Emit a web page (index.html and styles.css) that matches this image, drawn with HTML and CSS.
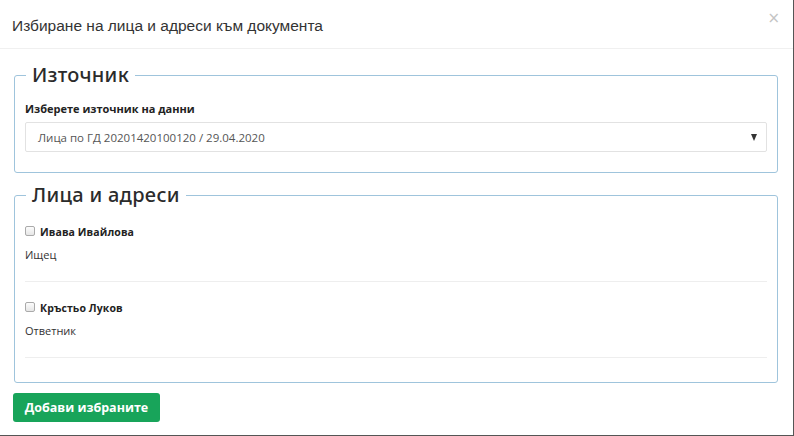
FILE: index.html
```html
<!DOCTYPE html>
<html lang="bg">
<head>
<meta charset="utf-8">
<title>Избиране на лица и адреси към документа</title>
<link rel="stylesheet" href="styles.css">
</head>
<body>
<div class="modal">
  <div class="modal-header">
    <h4 class="modal-title">Избиране на лица и адреси към документа</h4>
    <span class="close">×</span>
  </div>
  <div class="modal-body">
    <fieldset class="group group-source">
      <legend>Източник</legend>
      <label class="field-label">Изберете източник на данни</label>
      <div class="select">
        <span class="select-text">Лица по ГД 20201420100120 / 29.04.2020</span>
        <span class="select-arrow"></span>
      </div>
    </fieldset>
    <fieldset class="group group-persons">
      <legend>Лица и адреси</legend>
      <div class="person">
        <label class="person-name"><span class="checkbox"></span>Ивава Ивайлова</label>
        <div class="person-role">Ищец</div>
      </div>
      <div class="person">
        <label class="person-name"><span class="checkbox"></span>Кръстьо Луков</label>
        <div class="person-role">Ответник</div>
      </div>
    </fieldset>
    <button class="btn-add" type="button">Добави избраните</button>
  </div>
</div>
</body>
</html>
```
FILE: styles.css
```css
* { box-sizing: border-box; }
html, body { margin: 0; padding: 0; background: #fff; }
body { font-family: "Liberation Sans", Arial, sans-serif; color: #333; }

.modal {
  width: 794px;
  height: 436px;
  border-right: 1px solid #555;
  border-bottom: 1px solid #555;
  background: #fff;
  overflow: hidden;
}

.modal-header {
  position: relative;
  height: 49px;
  border-bottom: 1px solid #f0f0f0;
  padding: 16px 12px 0;
}
.modal-title {
  margin: 0;
  font-family: "Liberation Sans", Arial, sans-serif;
  font-weight: normal;
  font-size: 15.5px;
  line-height: 20px;
  color: #333;
}
.close {
  position: absolute;
  right: 13px;
  top: 9px;
  font-size: 15px;
  color: #c4c4c4;
  font-family: "DejaVu Sans", sans-serif;
}

.modal-body {
  padding: 12px 15px 0 14px;
}

.group {
  margin: 0;
  border: 1px solid #9fc4dc;
  border-radius: 3px;
  padding: 0 10px;
}
.group legend {
  margin-left: 1px;
  padding: 0 6px 0 6px;
  font-family: "Noto Sans", "Open Sans", sans-serif;
  font-size: 20px;
  line-height: 28px;
  font-weight: 500;
  color: #2b2b2b;
  letter-spacing: 0.3px;
}

.group-source { padding-top: 12px; padding-bottom: 20px; }
.field-label {
  display: block;
  font-family: "Open Sans", sans-serif;
  font-weight: bold;
  font-size: 11px;
  line-height: 16px;
  color: #222;
  margin-bottom: 5px;
}
.select {
  display: flex;
  align-items: center;
  justify-content: space-between;
  height: 30px;
  border: 1px solid #e2e2e2;
  border-radius: 2px;
  padding: 0 9px 0 12px;
}
.select-text {
  font-family: "Open Sans", sans-serif;
  font-size: 11.5px;
  color: #555;
}
.select-arrow {
  width: 0;
  height: 0;
  border-left: 3.5px solid transparent;
  border-right: 3.5px solid transparent;
  border-top: 7px solid #333;
  margin-top: 1px;
}

.group-persons {
  margin-top: 8px;
  padding-top: 13px;
  padding-bottom: 24px;
}
.person {
  border-bottom: 1px solid #eeeeee;
  padding-bottom: 16px;
  margin-bottom: 16px;
}
.person:last-child { margin-bottom: 0; }
.person-name {
  display: flex;
  align-items: center;
  height: 20px;
  font-family: "Open Sans", sans-serif;
  font-weight: bold;
  font-size: 10.5px;
  letter-spacing: 0.1px;
  color: #222;
}
.checkbox {
  display: inline-block;
  width: 10px;
  height: 10px;
  border: 1px solid #aaa;
  border-radius: 2px;
  background: linear-gradient(#fcfcfc, #e6e6e6);
  margin-right: 5px;
  margin-top: -3px;
}
.person-role {
  margin-top: 3px;
  font-family: "Open Sans", sans-serif;
  font-size: 11px;
  line-height: 20px;
  color: #333;
}

.btn-add {
  display: block;
  margin: 10px 0 0 -1px;
  width: 147px;
  height: 29px;
  border: none;
  border-radius: 3px;
  background: #18a45a;
  color: #fff;
  font-family: "Open Sans", sans-serif;
  font-weight: bold;
  font-size: 12.5px;
  padding: 0;
}
```
